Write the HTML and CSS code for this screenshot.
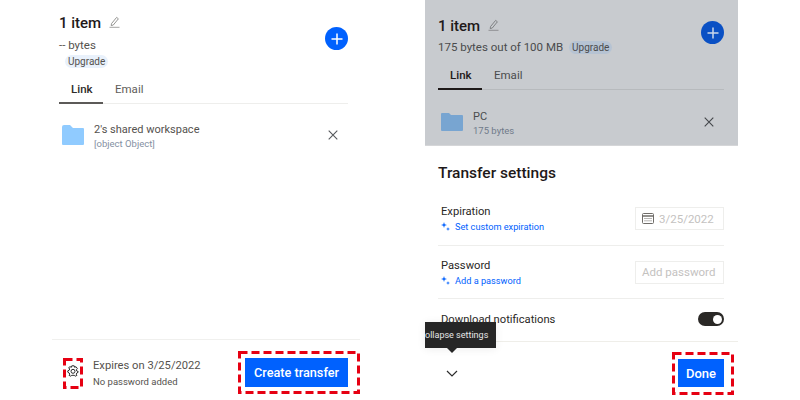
FILE: index.html
```html
<!DOCTYPE html>
<html>
<head>
    <title>Transfer settings</title>
    <link rel="stylesheet" href="styles.css">
</head>
<body>
    <div class="page">
        <!-- left panel -->
        <div class="panel panel-left">
            <div class="summary summary-left">
                <div class="summary-text">
                    <div class="title">1 item
                        <svg class="edit-icon" width="11" height="12" viewBox="0 0 11 12"><path d="M2.500 7.600 7.600 1.400 9.400 2.800 4.300 9 2.200 9.600Z" fill="none" stroke="#8a8a88" stroke-width="0.9"/><path d="M0.500 11.300H10.500" stroke="#9a9a98" stroke-width="0.9"/></svg>
                    </div>
                    <div class="bytes">-- bytes</div>
                    <span class="pill pill-left">Upgrade</span>
                </div>
                <div class="add-btn"><svg width="12" height="12" viewBox="0 0 12 12"><path d="M6 .5V11.500M.5 6H11.500" stroke="#fff" stroke-width="1.5"/></svg></div>
            </div>
            <div class="tabs">
                <div class="tab tab-active">Link</div>
                <div class="tab">Email</div>
            </div>
            <div class="file-row file-row-left">
                <svg class="folder" width="22" height="20" viewBox="0 0 22 20"><path d="M0 2Q0 0 2 0H8L11 3H21Q22 3 22 4V19Q22 20 21 20H1Q0 20 0 19Z" fill="#90cbff"/></svg>
                <div class="file-text">
                    <div class="file-name">2's shared workspace</div>
                    <div class="file-size">[object Object]</div>
                </div>
                <svg class="close-icon" width="10" height="10" viewBox="0 0 10 10"><path d="M.7 .7 9.300 9.300M9.300 .7 .7 9.300" stroke="#55585c" stroke-width="1.1"/></svg>
            </div>
            <div class="spacer"></div>
            <div class="footer">
                <svg class="gear" width="12" height="12" viewBox="0 0 12 12"><path d="M4.800 .8H7.200L7.600 2.300 9 1.700 10.400 3.700 9.300 4.800 9.800 6 11.200 6.600V7.200L9.800 8 9.300 9.200 9.900 10.400 8.200 11.200 7.200 10.300H4.800L3.800 11.200 2.100 10.400 2.700 9.200 2.200 8 .8 7.200V5.800L2.200 5.200 2.700 4 1.600 2.700 3 1.700 4.400 2.300Z" fill="none" stroke="#2c2c2c" stroke-width="1"/><circle cx="6" cy="6.300" r="2" fill="none" stroke="#2c2c2c" stroke-width="1"/></svg>
                <div class="footer-text">
                    <div class="expires">Expires on 3/25/2022</div>
                    <div class="no-password">No password added</div>
                </div>
                <button class="primary-btn create-btn">Create transfer</button>
            </div>
            <svg class="mark mark-gear" width="20" height="31"><rect x="1.500" y="1.500" width="17" height="28" fill="none" stroke="#e60012" stroke-width="3" stroke-dasharray="8 4"/></svg>
            <svg class="mark mark-create" width="122" height="43"><rect x="1.500" y="1.500" width="119" height="40" fill="none" stroke="#e60012" stroke-width="3" stroke-dasharray="8 4"/></svg>
        </div>

        <!-- right panel -->
        <div class="panel panel-right">
            <div class="dimmed">
                <div class="summary summary-right">
                    <div class="summary-text">
                        <div class="title">1 item
                            <svg class="edit-icon" width="11" height="12" viewBox="0 0 11 12"><path d="M2.500 7.600 7.600 1.400 9.400 2.800 4.300 9 2.200 9.600Z" fill="none" stroke="#77797c" stroke-width="0.9"/><path d="M0.500 11.300H10.500" stroke="#88898c" stroke-width="0.9"/></svg>
                        </div>
                        <div class="bytes-row">
                            <span class="bytes">175 bytes out of 100 MB</span>
                            <span class="pill pill-right">Upgrade</span>
                        </div>
                    </div>
                    <div class="add-btn add-btn-dim"><svg width="12" height="12" viewBox="0 0 12 12"><path d="M6 .5V11.500M.5 6H11.500" stroke="#c9d6ea" stroke-width="1.5"/></svg></div>
                </div>
                <div class="tabs tabs-dim">
                    <div class="tab tab-active">Link</div>
                    <div class="tab">Email</div>
                </div>
                <div class="file-row file-row-right">
                    <svg class="folder" width="22" height="18" viewBox="0 0 22 18"><path d="M0 1Q0 0 1 0H8L10 2H21Q22 2 22 3V17Q22 18 21 18H1Q0 18 0 17Z" fill="#78a5d1"/></svg>
                    <div class="file-text">
                        <div class="file-name">PC</div>
                        <div class="file-size">175 bytes</div>
                    </div>
                    <svg class="close-icon" width="10" height="10" viewBox="0 0 10 10"><path d="M.7 .7 9.300 9.300M9.300 .7 .7 9.300" stroke="#44474b" stroke-width="1.100"/></svg>
                </div>
            </div>
            <div class="settings">
                <h3 class="settings-title">Transfer settings</h3>
                <div class="setting setting-first">
                    <div>
                        <div class="setting-label">Expiration</div>
                        <div class="setting-link">
                            <svg width="9" height="9" viewBox="0 0 9 9"><path d="M3 0 3.700 2.300 6 3 3.700 3.700 3 6 2.300 3.700 0 3 2.300 2.300ZM7 5 7.500 6.500 9 7 7.500 7.500 7 9 6.500 7.500 5 7 6.500 6.500Z" fill="#0061fe"/></svg>
                            Set custom expiration
                        </div>
                    </div>
                    <div class="fake-input">
                        <svg width="12" height="11" viewBox="0 0 12 11"><rect x=".5" y=".5" width="11" height="10" rx="1" fill="none" stroke="#6f6c68"/><path d="M.5 3H11.500" stroke="#6f6c68" stroke-width="1.500"/><path d="M2.500 5.500H9.500M2.500 7.800H9.500" stroke="#6f6c68" stroke-dasharray="1 1"/></svg>
                        3/25/2022
                    </div>
                </div>
                <div class="setting">
                    <div>
                        <div class="setting-label">Password</div>
                        <div class="setting-link">
                            <svg width="9" height="9" viewBox="0 0 9 9"><path d="M3 0 3.700 2.300 6 3 3.700 3.700 3 6 2.300 3.700 0 3 2.300 2.300ZM7 5 7.500 6.500 9 7 7.500 7.500 7 9 6.500 7.500 5 7 6.500 6.500Z" fill="#0061fe"/></svg>
                            Add a password
                        </div>
                    </div>
                    <div class="fake-input">Add password</div>
                </div>
                <div class="setting setting-last">
                    <div class="setting-label">Download notifications</div>
                    <div class="toggle"><div class="toggle-knob"></div></div>
                </div>
            </div>
            <div class="actions">
                <svg class="chevron" width="12" height="7" viewBox="0 0 12 7"><path d="M1 1 6 6 11 1" fill="none" stroke="#2c2c2c" stroke-width="1.200"/></svg>
                <button class="primary-btn done-btn">Done</button>
            </div>
            <div class="tooltip">ollapse settings</div>
            <div class="tooltip-arrow"></div>
            <svg class="mark mark-done" width="62" height="43"><rect x="1.500" y="1.500" width="59" height="40" fill="none" stroke="#e60012" stroke-width="3" stroke-dasharray="8 4"/></svg>
        </div>
    </div>
</body>
</html>
```

FILE: styles.css
```css
body {
    margin: 0;
    padding: 0;
    font-family: Roboto, "Liberation Sans", sans-serif;
    background: white;
    color: #1e1919;
}

.page {
    display: flex;
    width: 800px;
    height: 400px;
    overflow: hidden;
}

.panel {
    position: relative;
    display: flex;
    flex-direction: column;
    box-sizing: border-box;
    height: 400px;
}

.panel-left {
    width: 308px;
    margin-left: 52px;
    padding: 0 12px 0 7px;
}

.panel-right {
    width: 313px;
    margin-left: 65px;
}

.summary {
    display: flex;
    justify-content: space-between;
}

.summary-left {
    height: 80px;
    padding-top: 15px;
    box-sizing: border-box;
}

.title {
    display: flex;
    align-items: center;
    gap: 8px;
    height: 16px;
    font-size: 15px;
    font-weight: 500;
}

.edit-icon {
    margin-top: -3px;
}

.bytes {
    font-size: 11.500px;
    color: #55524e;
}

.summary-left .bytes {
    margin-top: 7px;
    line-height: 14px;
}

.pill {
    display: inline-block;
    height: 13px;
    padding: 0 3px;
    border-radius: 7px;
    font-size: 10px;
    line-height: 13px;
    color: #55524e;
}

.pill-left {
    display: block;
    width: fit-content;
    margin: 3px 0 0 6px;
    background: #e9f1fb;
}

.pill-right {
    margin-left: 6px;
    background: #b6c3d3;
}

.add-btn {
    display: flex;
    align-items: center;
    justify-content: center;
    width: 23px;
    height: 23px;
    margin-top: 12px;
    border-radius: 50%;
    background: #0061fe;
}

.add-btn-dim {
    margin: 3px 0 0;
    background: #0a50c4;
}

.tabs {
    display: flex;
    height: 23px;
    border-bottom: 1px solid #eeeeec;
}

.tab {
    box-sizing: border-box;
    height: 24px;
    padding: 2px 12px 0;
    font-size: 11.500px;
    line-height: 14px;
    color: #605d59;
}

.tab-active {
    width: 44px;
    border-bottom: 2px solid #5c5a58;
    font-weight: 500;
    color: #2e2c2a;
}

.file-row {
    display: flex;
    align-items: center;
}

.file-row-left {
    height: 44px;
    margin-top: 9px;
    padding: 0 10px 0 3px;
}

.folder {
    flex-shrink: 0;
    margin-right: 10px;
}

.file-text {
    flex: 1;
    padding-top: 4px;
}

.file-name {
    font-size: 11px;
    line-height: 14px;
    color: #55524e;
}

.file-size {
    font-size: 9.500px;
    line-height: 14px;
    color: #8490a3;
}

.spacer {
    flex: 1;
}

.footer {
    display: flex;
    align-items: center;
    box-sizing: border-box;
    height: 61px;
    margin: 0 -12px 0 -7px;
    padding: 5px 12px 0 15px;
    border-top: 1px solid #f0f0ee;
}

.gear {
    margin: -3px 14px 0 0;
}

.footer-text {
    flex: 1;
}

.expires {
    font-size: 11.200px;
    line-height: 15px;
    color: #55524e;
}

.no-password {
    margin-top: 2px;
    font-size: 9.500px;
    line-height: 13px;
    color: #55524e;
}

.primary-btn {
    height: 29px;
    border: none;
    padding: 0;
    background: #0061fe;
    color: white;
    font-family: inherit;
    font-size: 13px;
    font-weight: 500;
}

.create-btn {
    width: 103px;
    font-size: 12.700px;
}

/* red annotation boxes */
.mark {
    position: absolute;
}

.mark-gear {
    left: 11px;
    top: 358px;
}

.mark-create {
    left: 186px;
    top: 351px;
}

.mark-done {
    left: 247px;
    top: 352px;
}

.dimmed {
    flex-shrink: 0;
    height: 146px;
    box-sizing: border-box;
    padding: 0 14px 0 13px;
    background: #c8cbcf;
    border-bottom: 1px solid #d5d6d8;
}

.summary-right {
    height: 66px;
    padding-top: 18px;
    box-sizing: border-box;
}

.bytes-row {
    display: flex;
    align-items: center;
    margin-top: 6px;
    height: 14px;
}

.dimmed .bytes,
.dimmed .tab,
.dimmed .pill,
.dimmed .file-name {
    color: #4a4b4d;
}

.tabs-dim {
    border-bottom-color: #b7babd;
}

.tabs-dim .tab-active {
    border-bottom-color: #1e1919;
    color: #1e1919;
}

.file-row-right {
    height: 36px;
    margin-top: 14px;
    padding: 0 10px 0 3px;
}

.dimmed .file-size {
    color: #6f7a8a;
}

.settings {
    padding: 0 14px 0 13px;
}

.settings-title {
    margin: 18px 0 0;
    font-size: 15.500px;
    line-height: 18px;
    font-weight: 500;
}

.setting {
    display: flex;
    align-items: center;
    justify-content: space-between;
    height: 52px;
    padding: 0 0 0 3px;
    border-bottom: 1px solid #eeeeec;
}

.setting-first {
    margin-top: 10px;
    height: 53px;
}

.setting-last {
    height: 40px;
    padding-bottom: 2px;
    border-bottom: none;
}

.setting-label {
    font-size: 11.200px;
    line-height: 15px;
    color: #2a2826;
}

.setting-link {
    display: flex;
    align-items: center;
    gap: 5px;
    margin-top: 1px;
    font-size: 9.200px;
    line-height: 13px;
    color: #0061fe;
}

.fake-input {
    display: flex;
    align-items: center;
    gap: 5px;
    box-sizing: border-box;
    width: 89px;
    height: 23px;
    padding: 0 6px;
    border: 1px solid #eeeeec;
    font-size: 11.500px;
    color: #c4c2bf;
}

.toggle {
    display: flex;
    justify-content: flex-end;
    align-items: center;
    box-sizing: border-box;
    width: 26px;
    height: 14px;
    padding-right: 2px;
    border-radius: 7px;
    background: #2a2826;
}

.toggle-knob {
    width: 9px;
    height: 9px;
    border-radius: 50%;
    background: white;
}

.actions {
    display: flex;
    align-items: center;
    justify-content: space-between;
    box-sizing: border-box;
    height: 59px;
    padding: 4px 14px 0 21px;
    border-top: 1px solid #efeee9;
}

.done-btn {
    width: 46px;
    height: 28px;
}

.tooltip {
    position: absolute;
    left: 0;
    top: 322px;
    width: 71px;
    height: 26px;
    background: #262626;
    box-shadow: 0 1px 8px rgba(0,0,0,0.08);
    white-space: nowrap;
    font-size: 9px;
    line-height: 26px;
    color: #e6e6e6;
}

.tooltip-arrow {
    position: absolute;
    left: 22px;
    top: 348px;
    border-left: 5px solid transparent;
    border-right: 5px solid transparent;
    border-top: 5px solid #262626;
}
```
